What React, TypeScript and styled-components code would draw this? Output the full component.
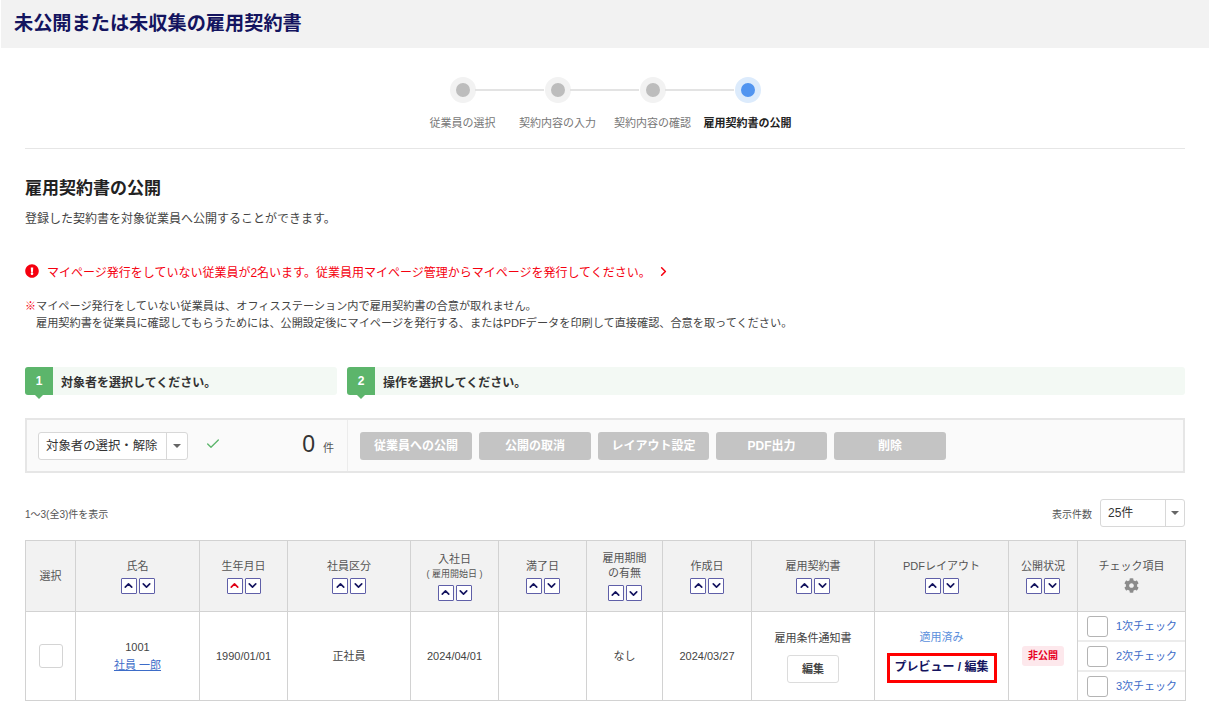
import React from "react";
import styled, { createGlobalStyle } from "styled-components";
import { Check, ChevronDown, ChevronRight, ChevronUp } from "lucide-react";
import { FaCog, FaExclamationCircle } from "react-icons/fa";

const GlobalStyle = createGlobalStyle`
  html, body {
    margin: 0;
    padding: 0;
    height: 703px;
    overflow: hidden;
    background: #fff;
    color: #444;
    font-family: "Liberation Sans", "Noto Sans CJK JP", sans-serif;
  }
  * { box-sizing: border-box; }
`;

const steps = ["従業員の選択", "契約内容の入力", "契約内容の確認", "雇用契約書の公開"];
const actions = [
  { label: "従業員への公開", width: 112 },
  { label: "公開の取消", width: 112 },
  { label: "レイアウト設定", width: 111 },
  { label: "PDF出力", width: 111 },
  { label: "削除", width: 112 },
];
const columns = [50, 124, 88, 123, 88, 88, 76, 89, 123, 134, 69, 108];

const SortButtons = ({ activeUp }: { activeUp?: boolean }) => (
  <SortRow>
    <SortButton $active={activeUp}>
      <ChevronUp size={13} strokeWidth={3} />
    </SortButton>
    <SortButton>
      <ChevronDown size={13} strokeWidth={3} />
    </SortButton>
  </SortRow>
);

const Dropdown = ({ label, width, mainWidth, fontSize }: { label: string; width: number; mainWidth: number; fontSize: number }) => (
  <SelectBox $width={width}>
    <SelectText $width={mainWidth} $fontSize={fontSize}>{label}</SelectText>
    <SelectArrow />
  </SelectBox>
);

const App: React.FunctionComponent<{}> = () => {
  return (
    <>
      <GlobalStyle />
      <PageTitle>未公開または未収集の雇用契約書</PageTitle>
      <Content>
        <Stepper>
          {steps.map((step, i) => (
            <Step key={step} $current={i === 3} $last={i === 3}>
              <StepDot $current={i === 3} />
              <StepLabel $current={i === 3}>{step}</StepLabel>
            </Step>
          ))}
        </Stepper>

        <SectionTitle>雇用契約書の公開</SectionTitle>
        <SectionLead>登録した契約書を対象従業員へ公開することができます。</SectionLead>

        <AlertRow>
          <FaExclamationCircle size={14} color="#f5000f" />
          <span>マイページ発行をしていない従業員が2名います。従業員用マイページ管理からマイページを発行してください。</span>
          <ChevronRight size={15} strokeWidth={2.5} />
        </AlertRow>

        <Note>
          <NoteMark>※</NoteMark>
          <div>
            マイページ発行をしていない従業員は、オフィスステーション内で雇用契約書の合意が取れません。
            <br />
            雇用契約書を従業員に確認してもらうためには、公開設定後にマイページを発行する、またはPDFデータを印刷して直接確認、合意を取ってください。
          </div>
        </Note>

        <GuideRow>
          <GuideBar>
            <GuideNumber>1</GuideNumber>
            <GuideText>対象者を選択してください。</GuideText>
          </GuideBar>
          <GuideBar>
            <GuideNumber>2</GuideNumber>
            <GuideText>操作を選択してください。</GuideText>
          </GuideBar>
        </GuideRow>

        <ActionPanel>
          <TargetArea>
            <Dropdown label="対象者の選択・解除" width={150} mainWidth={128} fontSize={12.4} />
            <CheckMark>
              <Check size={16} strokeWidth={2} />
            </CheckMark>
            <CountNumber>0</CountNumber>
            <CountUnit>件</CountUnit>
          </TargetArea>
          <ButtonArea>
            {actions.map(action => (
              <ActionButton key={action.label} $width={action.width}>
                {action.label}
              </ActionButton>
            ))}
          </ButtonArea>
        </ActionPanel>

        <ListBar>
          <ListCount>1〜3(全3)件を表示</ListCount>
          <PerPage>
            <PerPageLabel>表示件数</PerPageLabel>
            <Dropdown label="25件" width={85} mainWidth={65} fontSize={12} />
          </PerPage>
        </ListBar>

        <Table>
          <colgroup>
            {columns.map((width, i) => (
              <col key={i} width={width} />
            ))}
          </colgroup>
          <thead>
            <tr>
              <HeadCell>選択</HeadCell>
              <HeadCell>
                氏名
                <SortButtons />
              </HeadCell>
              <HeadCell>
                生年月日
                <SortButtons activeUp />
              </HeadCell>
              <HeadCell>
                社員区分
                <SortButtons />
              </HeadCell>
              <HeadCell>
                入社日
                <HeadSub>( 雇用開始日 )</HeadSub>
                <SortButtons />
              </HeadCell>
              <HeadCell>
                満了日
                <SortButtons />
              </HeadCell>
              <HeadCell>
                雇用期間
                <br />
                の有無
                <SortButtons />
              </HeadCell>
              <HeadCell>
                作成日
                <SortButtons />
              </HeadCell>
              <HeadCell>
                雇用契約書
                <SortButtons />
              </HeadCell>
              <HeadCell>
                PDFレイアウト
                <SortButtons />
              </HeadCell>
              <HeadCell>
                公開状況
                <SortButtons />
              </HeadCell>
              <HeadCell>
                チェック項目
                <GearWrap>
                  <FaCog size={15} color="#8c8c8c" />
                </GearWrap>
              </HeadCell>
            </tr>
          </thead>
          <tbody>
            <tr>
              <BodyCell>
                <CheckBox $size={24} $border="#d4d4d4" />
              </BodyCell>
              <NameCell>
                1001
                <br />
                <NameLink>社員 一郎</NameLink>
              </NameCell>
              <BodyCell>1990/01/01</BodyCell>
              <BodyCell>正社員</BodyCell>
              <BodyCell>2024/04/01</BodyCell>
              <BodyCell />
              <BodyCell>なし</BodyCell>
              <BodyCell>2024/03/27</BodyCell>
              <BodyCell>
                雇用条件通知書
                <EditButton>編集</EditButton>
              </BodyCell>
              <BodyCell>
                <AppliedLink>適用済み</AppliedLink>
                <PreviewBox>プレビュー / 編集</PreviewBox>
              </BodyCell>
              <BodyCell>
                <StatusTag>非公開</StatusTag>
              </BodyCell>
              <CheckListCell>
                {["1次チェック", "2次チェック", "3次チェック"].map(item => (
                  <CheckItem key={item}>
                    <CheckBox $size={21} $border="#b4b4b4" />
                    <CheckLabel>{item}</CheckLabel>
                  </CheckItem>
                ))}
              </CheckListCell>
            </tr>
          </tbody>
        </Table>
      </Content>
    </>
  );
};

const PageTitle = styled.h1`
  margin: 0 0 0 1px;
  height: 48px;
  padding: 0 13px;
  background: #f2f2f2;
  color: #14145f;
  font-size: 19.2px;
  font-weight: 700;
  line-height: 47px;
`;

const Content = styled.div`
  padding: 0 24px 0 25px;
`;

const Stepper = styled.div`
  display: grid;
  grid-template-columns: repeat(4, 95px);
  justify-content: center;
  height: 101px;
  padding-top: 29px;
  border-bottom: 1px solid #e6e6e6;
`;

const Step = styled.div<{ $current?: boolean; $last?: boolean }>`
  position: relative;
  display: flex;
  flex-direction: column;
  align-items: center;

  &::after {
    content: "";
    display: ${p => (p.$last ? "none" : "block")};
    position: absolute;
    top: 12px;
    left: 60px;
    width: 69px;
    height: 2px;
    background: #e3e3e3;
  }
`;

const StepDot = styled.div<{ $current?: boolean }>`
  width: 26px;
  height: 26px;
  border-radius: 50%;
  border: 6px solid ${p => (p.$current ? "#dcebfc" : "#f2f2f2")};
  background: ${p => (p.$current ? "#5295f0" : "#bdbdbd")};
`;

const StepLabel = styled.div<{ $current?: boolean }>`
  margin-top: 12px;
  font-size: 11px;
  line-height: 16px;
  white-space: nowrap;
  color: ${p => (p.$current ? "#222" : "#777")};
  font-weight: ${p => (p.$current ? 700 : 400)};
`;

const SectionTitle = styled.h2`
  margin: 29px 0 0;
  color: #222;
  font-size: 17px;
  font-weight: 700;
  line-height: 22px;
`;

const SectionLead = styled.p`
  margin: 10px 0 0;
  font-size: 12px;
  line-height: 18px;
  color: #444;
`;

const AlertRow = styled.div`
  display: flex;
  align-items: center;
  margin-top: 34px;
  height: 18px;
  color: #f5000f;
  font-size: 12px;

  span {
    margin-left: 8px;
    white-space: nowrap;
  }

  svg:last-child {
    margin-left: 5px;
  }
`;

const Note = styled.div`
  display: flex;
  margin-top: 18px;
  font-size: 11.17px;
  line-height: 17px;
  color: #444;
  white-space: nowrap;
`;

const NoteMark = styled.span`
  width: 11px;
  color: #f5000f;
  font-size: 11px;
  font-weight: 700;
`;

const GuideRow = styled.div`
  display: grid;
  grid-template-columns: 312px 1fr;
  column-gap: 10px;
  margin-top: 35px;
`;

const GuideBar = styled.div`
  display: flex;
  align-items: center;
  height: 28px;
  border-radius: 3px;
  background: #f3f9f4;
`;

const GuideNumber = styled.div`
  position: relative;
  width: 28px;
  height: 28px;
  border-radius: 3px 0 0 3px;
  background: #5cb56b;
  color: #fff;
  font-size: 12px;
  font-weight: 700;
  line-height: 28px;
  text-align: center;

  &::after {
    content: "";
    position: absolute;
    left: 10px;
    bottom: -4px;
    border-left: 4px solid transparent;
    border-right: 4px solid transparent;
    border-top: 4px solid #5cb56b;
  }
`;

const GuideText = styled.div`
  margin-left: 8px;
  color: #333;
  font-size: 12px;
  font-weight: 700;
`;

const ActionPanel = styled.div`
  display: flex;
  height: 55px;
  margin-top: 23px;
  border: 2px solid #e6e6e6;
  background: #fafafa;
`;

const TargetArea = styled.div`
  display: flex;
  align-items: center;
  width: 321px;
  padding: 0 11px;
  border-right: 1px solid #ececec;
`;

const SelectBox = styled.div<{ $width: number }>`
  display: flex;
  width: ${p => p.$width}px;
  height: 28px;
  border: 1px solid #d8d8d8;
  border-radius: 3px;
  background: #fff;
`;

const SelectText = styled.div<{ $width: number; $fontSize: number }>`
  width: ${p => p.$width}px;
  padding-left: 7px;
  border-right: 1px solid #d8d8d8;
  color: #333;
  font-size: ${p => p.$fontSize}px;
  line-height: 26px;
  white-space: nowrap;
`;

const SelectArrow = styled.div`
  flex: 1;
  position: relative;

  &::after {
    content: "";
    position: absolute;
    top: 11px;
    left: 50%;
    margin-left: -4px;
    border-left: 4px solid transparent;
    border-right: 4px solid transparent;
    border-top: 4px solid #666;
  }
`;

const CheckMark = styled.div`
  display: flex;
  margin: 0 0 3px 17px;
  color: #5cb56b;
`;

const CountNumber = styled.div`
  margin: 0 0 2px auto;
  color: #333;
  font-size: 23px;
`;

const CountUnit = styled.div`
  margin: 3px 2px 0 8px;
  color: #555;
  font-size: 11px;
`;

const ButtonArea = styled.div`
  display: flex;
  align-items: center;
  gap: 7px;
  padding-left: 12px;
`;

const ActionButton = styled.div<{ $width: number }>`
  width: ${p => p.$width}px;
  height: 28px;
  border-radius: 3px;
  background: #c4c4c4;
  color: #fff;
  font-size: 12px;
  font-weight: 700;
  line-height: 28px;
  text-align: center;
`;

const ListBar = styled.div`
  display: flex;
  align-items: center;
  justify-content: space-between;
  height: 28px;
  margin-top: 26px;
`;

const ListCount = styled.div`
  color: #555;
  font-size: 10px;
`;

const PerPage = styled.div`
  display: flex;
  align-items: center;
  gap: 8px;
`;

const PerPageLabel = styled.div`
  color: #555;
  font-size: 10px;
`;

const Table = styled.table`
  width: 1160px;
  margin-top: 13px;
  border-collapse: collapse;
  table-layout: fixed;
`;

const HeadCell = styled.th`
  height: 71px;
  padding: 0;
  border: 1px solid #d2d2d2;
  background: #f2f2f2;
  color: #555;
  font-size: 11px;
  font-weight: 400;
  line-height: 15px;
  text-align: center;
  vertical-align: middle;
`;

const HeadSub = styled.div`
  font-size: 9px;
  line-height: 14px;
`;

const SortRow = styled.div`
  display: flex;
  justify-content: center;
  gap: 2px;
  margin-top: 4px;
`;

const SortButton = styled.div<{ $active?: boolean }>`
  display: flex;
  align-items: center;
  justify-content: center;
  width: 16px;
  height: 16px;
  border: 1px solid #5f5fa8;
  border-radius: 1px;
  background: #fff;
  color: ${p => (p.$active ? "#e00016" : "#14145f")};
`;

const GearWrap = styled.div`
  display: flex;
  justify-content: center;
  margin-top: 4px;
`;

const BodyCell = styled.td`
  height: 89px;
  padding: 0;
  border: 1px solid #d2d2d2;
  color: #444;
  font-size: 11px;
  line-height: 16px;
  text-align: center;
  vertical-align: middle;
`;

const NameCell = styled(BodyCell)`
  line-height: 18px;
`;

const CheckListCell = styled(BodyCell)`
  vertical-align: top;
`;

const CheckBox = styled.div<{ $size: number; $border: string }>`
  flex: none;
  display: inline-block;
  width: ${p => p.$size}px;
  height: ${p => p.$size}px;
  border: 1px solid ${p => p.$border};
  border-radius: 3px;
  background: #fff;
  vertical-align: middle;
`;

const NameLink = styled.a`
  color: #3d6cc8;
  text-decoration: underline;
`;

const EditButton = styled.div`
  width: 52px;
  height: 28px;
  margin: 9px auto 0;
  border: 1px solid #dcdcdc;
  border-radius: 3px;
  color: #444;
  font-size: 11px;
  font-weight: 700;
  line-height: 26px;
`;

const AppliedLink = styled.a`
  display: block;
  color: #5b8fdc;
  font-size: 11px;
`;

const PreviewBox = styled.div`
  width: 110px;
  height: 30px;
  margin: 8px auto 0;
  border: 3px solid #f00;
  color: #14145f;
  font-size: 12px;
  font-weight: 700;
  line-height: 23px;
  white-space: nowrap;
`;

const StatusTag = styled.span`
  display: inline-block;
  width: 42px;
  height: 20px;
  border-radius: 3px;
  background: #fde8ec;
  color: #e60023;
  font-size: 10px;
  font-weight: 700;
  line-height: 20px;
`;

const CheckItem = styled.div`
  display: flex;
  align-items: center;
  height: 30px;
  padding-left: 9px;
  border-bottom: 2px solid #ececec;

  &:last-child {
    height: 28px;
    border-bottom: 0;
  }
`;

const CheckLabel = styled.span`
  margin-left: 8px;
  color: #3d6cc8;
  font-size: 11px;
  white-space: nowrap;
`;

export default App;
